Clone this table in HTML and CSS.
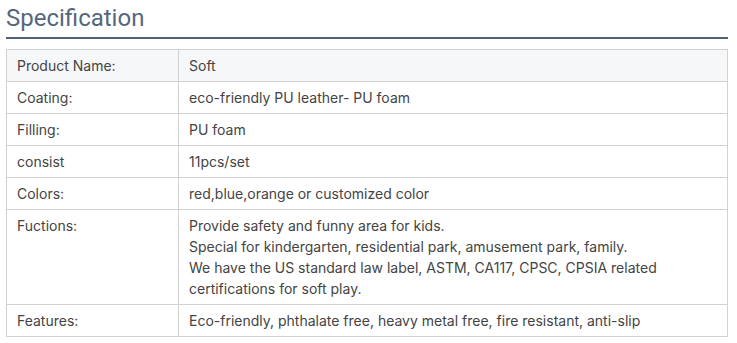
FILE: index.html
```html
<!DOCTYPE html>
<html>
<head>
<meta charset="utf-8">
<link rel="stylesheet" href="styles.css">
</head>
<body>
<div class="spec">
  <h2 class="spec-title">Specification</h2>
  <table class="spec-table">
    <tr class="head-row"><td class="key">Product Name:</td><td>Soft</td></tr>
    <tr><td class="key">Coating:</td><td>eco-friendly PU leather- PU foam</td></tr>
    <tr><td class="key">Filling:</td><td>PU foam</td></tr>
    <tr><td class="key">consist</td><td>11pcs/set</td></tr>
    <tr><td class="key">Colors:</td><td>red,blue,orange or customized color</td></tr>
    <tr><td class="key">Fuctions:</td><td>Provide safety and funny area for kids.<br>Special for kindergarten, residential park, amusement park, family.<br>We have the US standard law label, ASTM, CA117, CPSC, CPSIA related<br>certifications for soft play.</td></tr>
    <tr><td class="key">Features:</td><td>Eco-friendly, phthalate free, heavy metal free, fire resistant, anti-slip</td></tr>
  </table>
</div>
</body>
</html>
```

FILE: styles.css
```css
html, body { margin: 0; padding: 0; background: #fff; }
.spec { padding: 0 9px 0 6px; }
.spec-title {
  margin: 0;
  padding: 3px 0 0 0;
  height: 39px;
  box-sizing: border-box;
  font-family: Roboto, "Liberation Sans", sans-serif;
  font-weight: 400;
  font-size: 24px;
  line-height: 30px;
  color: #56677d;
  border-bottom: 2px solid #526177;
}
.spec-table {
  margin-top: 10px;
  width: 100%;
  border-collapse: collapse;
  font-family: Inter, "Liberation Sans", sans-serif;
  font-size: 14px;
  line-height: 21px;
  color: #444;
}
.spec-table td {
  border: 1px solid #d2d2d2;
  padding: 5px 10px;
  height: 21px;
  vertical-align: top;
}
.spec-table td.key { width: 151px; }
.head-row td { background: #f6f7f9; }
```
